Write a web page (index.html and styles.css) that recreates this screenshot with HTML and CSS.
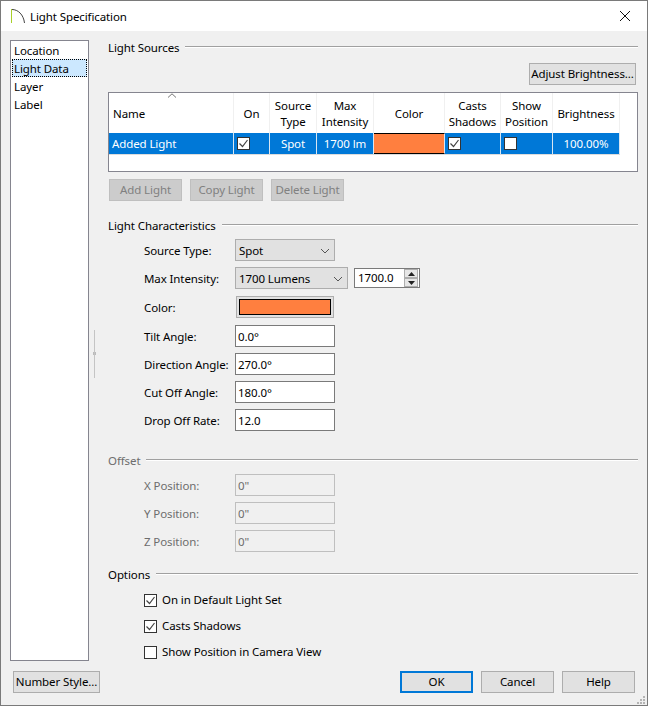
FILE: index.html
```html
<!DOCTYPE html>
<html lang="en">
<head>
<meta charset="utf-8">
<title>Light Specification</title>
<link rel="stylesheet" href="styles.css">
</head>
<body>
<div class="window">
  <header class="titlebar">
    <svg class="app-icon" width="16" height="16" viewBox="0 0 16 16"><path d="M1.500 1v14" stroke="#a8cf2a" stroke-width="1" fill="none"/><path d="M2 1.500C8 1.500 13.500 6.500 14.500 15" stroke="#444" stroke-width="1" fill="none"/></svg>
    <span class="title">Light Specification</span>
    <svg class="close" width="12" height="12" viewBox="0 0 12 12"><path d="M1 1l10 10M11 1L1 11" stroke="#111" stroke-width="1" fill="none"/></svg>
  </header>
  <div class="content">
    <nav class="sidebar">
      <div class="nav-item">Location</div>
      <div class="nav-item selected">Light Data</div>
      <div class="nav-item">Layer</div>
      <div class="nav-item">Label</div>
    </nav>
    <div class="gutter"><span class="splitter"></span></div>
    <main class="main">
      <div class="head"><span>Light Sources</span><i class="rule"></i></div>
      <div class="adjust-row"><button class="btn adjust">Adjust Brightness...</button></div>
      <div class="table">
        <span class="sort-arrow"><svg width="10" height="5" viewBox="0 0 10 5"><path d="M1 4.500L5 .8l4 3.700" stroke="#777" fill="none"/></svg></span>
        <div class="tr th">
          <div class="cell name">Name</div><div class="cell">On</div><div class="cell">Source<br>Type</div><div class="cell">Max<br>Intensity</div><div class="cell">Color</div><div class="cell">Casts<br>Shadows</div><div class="cell">Show<br>Position</div><div class="cell">Brightness</div>
        </div>
        <div class="tr sel">
          <div class="cell name">Added Light</div>
          <div class="cell left"><span class="check dark"><svg width="11" height="11" viewBox="0 0 11 11"><path d="M1.500 5.500l3 3 5-6.500" stroke="#444" stroke-width="1.200" fill="none"/></svg></span></div>
          <div class="cell">Spot</div>
          <div class="cell">1700 lm</div>
          <div class="cell swatch-cell"></div>
          <div class="cell left"><span class="check dark"><svg width="11" height="11" viewBox="0 0 11 11"><path d="M1.500 5.500l3 3 5-6.500" stroke="#444" stroke-width="1.200" fill="none"/></svg></span></div>
          <div class="cell left"><span class="check dark"></span></div>
          <div class="cell">100.00%</div>
        </div>
      </div>
      <div class="action-row">
        <button class="btn disabled act">Add Light</button>
        <button class="btn disabled act">Copy Light</button>
        <button class="btn disabled act">Delete Light</button>
      </div>

      <div class="head lc"><span>Light Characteristics</span><i class="rule"></i></div>
      <div class="row"><label>Source Type:</label><div class="select"><span>Spot</span><svg width="10" height="6" viewBox="0 0 10 6"><path d="M1 1l4 4 4-4" stroke="#555" fill="none"/></svg></div></div>
      <div class="row"><label>Max Intensity:</label><div class="select wide"><span>1700 Lumens</span><svg width="10" height="6" viewBox="0 0 10 6"><path d="M1 1l4 4 4-4" stroke="#555" fill="none"/></svg></div>
        <div class="spin"><span>1700.0</span><div class="spin-btns"><b><svg width="7" height="4" viewBox="0 0 7 4"><path d="M3.500 0L7 4H0z" fill="#222"/></svg></b><b><svg width="7" height="4" viewBox="0 0 7 4"><path d="M0 0h7L3.500 4z" fill="#222"/></svg></b></div></div>
      </div>
      <div class="row color-row"><label>Color:</label><div class="color-btn"><div class="color-fill"></div></div></div>
      <div class="row"><label>Tilt Angle:</label><div class="field">0.0°</div></div>
      <div class="row"><label>Direction Angle:</label><div class="field">270.0°</div></div>
      <div class="row"><label>Cut Off Angle:</label><div class="field">180.0°</div></div>
      <div class="row"><label>Drop Off Rate:</label><div class="field">12.0</div></div>

      <div class="head off muted"><span>Offset</span><i class="rule"></i></div>
      <div class="row muted"><label>X Position:</label><div class="field off-field">0"</div></div>
      <div class="row muted"><label>Y Position:</label><div class="field off-field">0"</div></div>
      <div class="row muted"><label>Z Position:</label><div class="field off-field">0"</div></div>

      <div class="head opt"><span>Options</span><i class="rule"></i></div>
      <div class="opts">
        <div class="opt-row"><span class="check"><svg width="11" height="11" viewBox="0 0 11 11"><path d="M1.500 5.500l3 3 5-6.500" stroke="#444" stroke-width="1.200" fill="none"/></svg></span>On in Default Light Set</div>
        <div class="opt-row"><span class="check"><svg width="11" height="11" viewBox="0 0 11 11"><path d="M1.500 5.500l3 3 5-6.500" stroke="#444" stroke-width="1.200" fill="none"/></svg></span>Casts Shadows</div>
        <div class="opt-row"><span class="check"></span>Show Position in Camera View</div>
      </div>
    </main>
  </div>
  <footer class="footer">
    <button class="btn number">Number Style...</button>
    <div class="footer-right">
      <button class="btn foot primary">OK</button>
      <button class="btn foot">Cancel</button>
      <button class="btn foot">Help</button>
    </div>
    <svg class="grip" width="9" height="9" viewBox="0 0 9 9"><path d="M6 0h2v2H6zM3 3h2v2H3zM6 3h2v2H6zM0 6h2v2H0zM3 6h2v2H3zM6 6h2v2H6z" fill="#b4b4b4"/></svg>
  </footer>
</div>
</body>
</html>
```
FILE: styles.css
```css
* { box-sizing: border-box; }
html, body { margin: 0; padding: 0; }
body { font: 11.5px/16px "Noto Sans", "Open Sans", sans-serif; letter-spacing: -0.1px; color: #000; }
.window { position: relative; width: 648px; height: 706px; border: 1px solid #7a7a7a; background: #f0f0f0; display: flex; flex-direction: column; overflow: hidden; }
.titlebar { height: 30px; background: #fff; display: flex; align-items: center; padding: 0 16px 0 9px; flex: none; }
.app-icon { flex: none; margin-right: 4px; }
.title { flex: 1; padding-top: 1px; }
.close { flex: none; }
.content { flex: 1; display: flex; padding: 9px 9px 0; min-height: 0; }
.sidebar { width: 79px; flex: none; background: #fff; border: 1px solid #85858f; }
.nav-item { height: 18px; line-height: 20px; margin: 0 1px; padding-left: 2px; }
.nav-item.selected { background: #cce8ff; outline: 1px dotted #000; outline-offset: -1px; }
.gutter { width: 19px; flex: none; display: flex; align-items: center; justify-content: center; padding: 6px 9px 0 0; }
.splitter { display: block; width: 5px; height: 48px; background: linear-gradient(#c4c4c4, #c4c4c4) center / 1px 100% no-repeat, radial-gradient(circle, #bbb 1.500px, transparent 2px) center / 5px 5px no-repeat; }
.main { width: 530px; flex: none; }
.head { height: 16px; display: flex; align-items: flex-start; white-space: nowrap; line-height: 16px; }
.head span { flex: none; margin-right: 6px; }
.rule { flex: 1; height: 2px; margin-top: 6px; background: linear-gradient(#a0a0a0 1px, #fff 1px); }
.adjust-row { display: flex; justify-content: flex-end; margin-top: 7px; padding-right: 2px; }
.btn { font: inherit; letter-spacing: inherit; color: #000; background: #e1e1e1; border: 1px solid #adadad; height: 22px; padding: 0; white-space: nowrap; }
.adjust { width: 107px; }
.table { position: relative; height: 80px; margin-top: 7px; background: #fff; border: 1px solid #85858f; }
.sort-arrow { position: absolute; left: 58px; top: 0; display: block; line-height: 0; }
.tr { display: grid; grid-template-columns: 125px 36px 47px 57px 71px 56px 52px 67px; width: 511px; }
.cell { display: flex; align-items: center; justify-content: center; text-align: center; border-right: 1px solid #f0f0f0; padding-top: 1px; }
.cell.name { justify-content: flex-start; padding-left: 4px; }
.cell.left { justify-content: flex-start; padding: 0 0 0 3px; }
.th { height: 40px; }
.sel { height: 22px; background: #0078d7; color: #fff; border-bottom: 1px solid #dcdcdc; }
.sel .cell { border-right-color: #d8e6f2; }
.sel .cell.name { padding-left: 3px; }
.swatch-cell { background: #ff7f3f; border-top: 1px solid #000; border-bottom: 1px solid #000; }
.check { display: inline-flex; align-items: center; justify-content: center; flex: none; width: 13px; height: 13px; background: #fff; border: 1px solid #333; }
.action-row { display: flex; gap: 8px; margin-top: 7px; padding-left: 1px; }
.act { width: 73px; }
.disabled { background: #ccc; border-color: #bfbfbf; color: #808080; }
.lc { margin-top: 17px; }
.row { display: flex; align-items: center; height: 22px; margin-top: 6px; padding-left: 36px; }
.head + .row { margin-top: 5px; }
.row label { width: 91px; flex: none; white-space: nowrap; padding-top: 1px; }
.select { width: 100px; height: 22px; background: #e1e1e1; border: 1px solid #adadad; display: flex; align-items: center; justify-content: space-between; padding: 1px 4px 0 3px; }
.select.wide { width: 113px; }
.spin { width: 66px; height: 20px; margin-left: 6px; background: #fff; border: 1px solid #7a7a7a; display: flex; align-items: center; justify-content: space-between; padding-left: 3px; }
.spin-btns { width: 14px; height: 18px; display: flex; flex-direction: column; margin-right: 1px; }
.spin-btns b { flex: 1; display: flex; align-items: center; justify-content: center; background: #e6e6e6; border: 1px solid #adadad; }
.color-row { margin: 7px 0; padding-left: 36px; }
.color-btn { width: 98px; height: 22px; margin-left: 1px; background: #e1e1e1; border: 1px solid #adadad; padding: 2px; }
.color-fill { height: 100%; background: #ff7f3f; border: 1px solid #000; }
.field { width: 100px; height: 22px; background: #fff; border: 1px solid #7a7a7a; padding: 1px 2px 0; line-height: 20px; }
.off { margin-top: 22px; }
.muted { color: #6d6d6d; }
.off-field { background: #f0f0f0; border-color: #bfbfbf; }
.opt { margin-top: 15px; }
.opts { display: flex; flex-direction: column; gap: 10px; margin-top: 9px; padding-left: 36px; }
.opt-row { display: flex; align-items: center; height: 16px; gap: 5px; }
.footer { flex: none; display: flex; justify-content: space-between; padding: 10px 12px 12px; height: 44px; align-items: flex-start; }
.number { width: 87px; }
.footer-right { display: flex; gap: 8px; }
.foot { width: 73px; }
.primary { border: 2px solid #0078d7; }
.grip { position: absolute; right: 1px; bottom: 0; }
```
